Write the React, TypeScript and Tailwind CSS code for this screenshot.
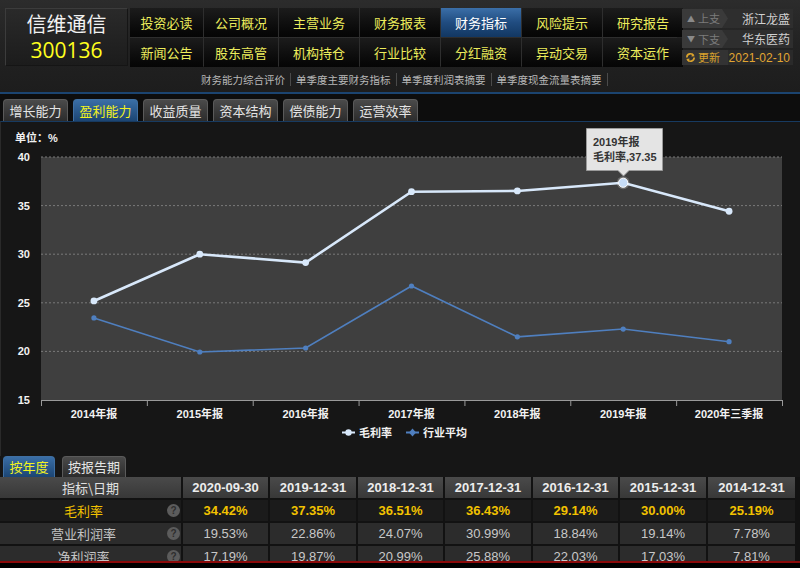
import React from "react";

const CJK = '"Noto Sans CJK SC", "Noto Sans", sans-serif';
const ARIAL = '"Liberation Sans", "Noto Sans CJK SC", Arial, sans-serif';

const navRows = [
  ["投资必读", "公司概况", "主营业务", "财务报表", "财务指标", "风险提示", "研究报告"],
  ["新闻公告", "股东高管", "机构持仓", "行业比较", "分红融资", "异动交易", "资本运作"],
];

const subnav = ["财务能力综合评价", "单季度主要财务指标", "单季度利润表摘要", "单季度现金流量表摘要"];
const tabs = ["增长能力", "盈利能力", "收益质量", "资本结构", "偿债能力", "运营效率"];

const cats = ["2014年报", "2015年报", "2016年报", "2017年报", "2018年报", "2019年报", "2020年三季报"];
const gross = [25.19, 30.0, 29.14, 36.43, 36.51, 37.35, 34.42];
const ind = [23.44, 19.94, 20.35, 26.73, 21.5, 22.3, 21.0];

const X0 = 41;
const X1 = 782;
const Y0 = 157;
const Y1 = 400;
const cw = (X1 - X0) / 7;
const px = (i: number) => X0 + cw * (i + 0.5);
const py = (v: number) => Y0 + ((40 - v) / 25) * (Y1 - Y0);

const headers = ["指标\\日期", "2020-09-30", "2019-12-31", "2018-12-31", "2017-12-31", "2016-12-31", "2015-12-31", "2014-12-31"];
const rows = [
  { name: "毛利率", vals: ["34.42%", "37.35%", "36.51%", "36.43%", "29.14%", "30.00%", "25.19%"], hi: true },
  { name: "营业利润率", vals: ["19.53%", "22.86%", "24.07%", "30.99%", "18.84%", "19.14%", "7.78%"], hi: false },
  { name: "净利润率", vals: ["17.19%", "19.87%", "20.99%", "25.88%", "22.03%", "17.03%", "7.81%"], hi: false },
];
const colW = ["w-[183px]", "w-[87px]", "w-[88px]", "w-[87px]", "w-[88px]", "w-[87px]", "w-[88px]", "w-[89px]"];

function Chart() {
  const pts1 = gross.map((v, i) => `${px(i)},${py(v)}`).join(" ");
  const pts2 = ind.map((v, i) => `${px(i)},${py(v)}`).join(" ");
  const grid = [40, 35, 30, 25, 20];
  return (
    <svg width="800" height="335" viewBox="0 121 800 335" style={{ fontFamily: ARIAL }}>
      <text x="15" y="142" fill="#f0f0f0" fontSize="11" fontWeight="bold">单位：%</text>
      <rect x={X0} y={Y0} width={X1 - X0} height={Y1 - Y0} fill="#3f3f3f" />
      {grid.map((g) => (
        <line key={g} x1={X0} x2={X1} y1={py(g)} y2={py(g)} stroke="#7a7a7a" strokeDasharray="2 2" strokeWidth="1" />
      ))}
      {[40, 35, 30, 25, 20, 15].map((g) => (
        <text key={g} x="30" y={py(g) + 4} fill="#f2f2f2" fontSize="11" fontWeight="bold" textAnchor="end">{g}</text>
      ))}
      <line x1={X0} x2={X1} y1={Y1 + 0.5} y2={Y1 + 0.5} stroke="#9a9a9a" strokeWidth="1" />
      {Array.from({ length: 8 }).map((_, i) => (
        <line key={i} x1={X0 + cw * i + 0.5} x2={X0 + cw * i + 0.5} y1={Y1} y2={Y1 + 6} stroke="#9a9a9a" strokeWidth="1" />
      ))}
      {cats.map((c, i) => (
        <text key={c} x={px(i)} y="418" fill="#f2f2f2" fontSize="11" fontWeight="bold" textAnchor="middle">{c}</text>
      ))}
      <polyline points={pts2} fill="none" stroke="#4f7fbf" strokeWidth="1.6" />
      {ind.map((v, i) => (
        <circle key={i} cx={px(i)} cy={py(v)} r="2.6" fill="#4f7fbf" />
      ))}
      <polyline points={pts1} fill="none" stroke="#d8e8fa" strokeWidth="2.6" />
      {gross.map((v, i) =>
        i === 5 ? null : <circle key={i} cx={px(i)} cy={py(v)} r="3.4" fill="#d8e8fa" />
      )}
      <circle cx={px(5)} cy={py(37.35)} r="6.5" fill="rgba(255,255,255,0.22)" />
      <circle cx={px(5)} cy={py(37.35)} r="4.6" fill="#c6dcf6" stroke="#ffffff" strokeWidth="1" />
      {/* tooltip */}
      <path d="M586.5,128.5 H662.5 V170.5 H629 L623.5,176 L618,170.5 H586.5 Z" fill="#e4e4e4" stroke="#9a9a9a" strokeWidth="1" />
      <text x="593" y="146" fill="#333" fontSize="11" fontWeight="bold">2019年报</text>
      <text x="593" y="161" fill="#333" fontSize="11" fontWeight="bold">毛利率,37.35</text>
      {/* legend */}
      <line x1="342" x2="355" y1="432.5" y2="432.5" stroke="#d8e8fa" strokeWidth="2" />
      <circle cx="348.5" cy="432.5" r="3.2" fill="#d8e8fa" />
      <text x="359" y="437" fill="#f2f2f2" fontSize="11" fontWeight="bold">毛利率</text>
      <line x1="406" x2="419" y1="432.5" y2="432.5" stroke="#4f7fbf" strokeWidth="2" />
      <path d="M412.5,428.5 L416,432.5 L412.5,436.5 L409,432.5 Z" fill="#4f7fbf" />
      <text x="423" y="437" fill="#f2f2f2" fontSize="11" fontWeight="bold">行业平均</text>
    </svg>
  );
}

function QIcon() {
  return (
    <span className="flex h-[13px] w-[13px] items-center justify-center rounded-full bg-[#5c5c5c] text-[10px] font-bold leading-none text-[#2e2e2e]" style={{ fontFamily: ARIAL }}>
      ?
    </span>
  );
}

export default function App() {
  return (
    <div className="relative h-[568px] w-[800px] overflow-hidden bg-[#000]" style={{ fontFamily: CJK }}>
      {/* header */}
      <div className="bg-gradient-to-b from-[#2c2c2c] via-[#222222] to-[#1d1d1d]">
        <div className="flex h-[67px] pl-[5px] pt-[8px]">
          <div className="flex h-[58px] w-[123px] flex-col items-center justify-center border border-t-[#3c3c3c] border-l-[#3c3c3c] border-r-[#151515] border-b-[#151515] bg-gradient-to-b from-[#2a2a2a] to-[#1c1c1c]">
            <div className="text-[20px] leading-[26px] text-[#f2f2f2]">信维通信</div>
            <div className="text-[21px] leading-[26px] text-[#ffff1e]" style={{ fontFamily: '"Open Sans", "Liberation Sans", sans-serif' }}>300136</div>
          </div>
          <div className="ml-[2px] grid h-[58px] w-[547px] grid-cols-[73px_74px_80px_80px_80px_80px_80px] grid-rows-[29px_29px] gap-px bg-[#2e2e2e]">
            {navRows.flat().map((t) => {
              const active = t === "财务指标";
              return (
                <div
                  key={t}
                  className={
                    active
                      ? "flex items-center justify-center bg-gradient-to-b from-[#3b6fa8] via-[#204c80] to-[#123762] text-[13px] text-white"
                      : "flex items-center justify-center bg-gradient-to-b from-[#1c1c1c] to-[#050505] text-[13px] text-[#ecec5c]"
                  }
                >
                  {t}
                </div>
              );
            })}
          </div>
          <div className="ml-[5px] mt-[1px] flex w-[111px] flex-col gap-[2px]">
            <div className="flex h-[19px] bg-[#2e2e2e]">
              <div className="flex w-[46px] items-center gap-[3px] bg-[#3a3a3a] pl-[5px] text-[11px] text-[#7c7c7c] [clip-path:polygon(0_0,40px_0,46px_50%,40px_100%,0_100%)]">
                <span className="text-[8px] text-[#8a8a8a]">▲</span>上支
              </div>
              <div className="flex flex-1 items-center justify-end pr-[3px] text-[12px] text-[#d0d0d0]">浙江龙盛</div>
            </div>
            <div className="flex h-[18px] bg-[#2e2e2e]">
              <div className="flex w-[46px] items-center gap-[3px] bg-[#3a3a3a] pl-[5px] text-[11px] text-[#7c7c7c] [clip-path:polygon(0_0,40px_0,46px_50%,40px_100%,0_100%)]">
                <span className="text-[8px] text-[#8a8a8a]">▼</span>下支
              </div>
              <div className="flex flex-1 items-center justify-end pr-[3px] text-[12px] text-[#d0d0d0]">华东医药</div>
            </div>
            <div className="flex h-[15px] bg-[#2a2a2a]">
              <div className="flex w-[46px] items-center gap-[2px] bg-[#333333] pl-[3px] text-[11px] text-[#d9a22c]">
                <svg width="11" height="11" viewBox="0 0 12 12">
                  <path d="M2 6 A4 4 0 0 1 9.5 4" fill="none" stroke="#d9a22c" strokeWidth="1.8" />
                  <path d="M8 1.5 L10.5 4.5 L7 5 Z" fill="#d9a22c" />
                  <path d="M10 6 A4 4 0 0 1 2.5 8" fill="none" stroke="#d9a22c" strokeWidth="1.8" />
                  <path d="M4 10.5 L1.5 7.5 L5 7 Z" fill="#d9a22c" />
                </svg>
                更新
              </div>
              <div className="flex flex-1 items-center justify-end pr-[3px] text-[12px] text-[#e2a632]" style={{ fontFamily: ARIAL }}>2021-02-10</div>
            </div>
          </div>
        </div>
        {/* subnav */}
        <div className="flex h-[25px] items-center pl-[196px] text-[10.5px] text-[#b8b8b8]">
          {subnav.map((s) => (
            <div key={s} className="flex items-center">
              <span className="px-[5px]">{s}</span>
              <span className="h-[13px] w-px bg-[#4a4a4a]" />
            </div>
          ))}
        </div>
      </div>
      <div className="h-[2px] bg-[#1b4470]" />
      {/* tabs */}
      <div className="flex h-[27px] items-end gap-[5px] bg-[#0d0d0d] pl-[3px]">
        {tabs.map((t) => {
          const active = t === "盈利能力";
          return (
            <div
              key={t}
              className={
                active
                  ? "flex h-[22px] w-[65px] items-center justify-center rounded-t-[4px] border border-b-0 border-[#3f6fa2] bg-gradient-to-b from-[#3a6ea6] to-[#1c4573] text-[13px] text-[#f2f21e]"
                  : "flex h-[22px] w-[65px] items-center justify-center rounded-t-[4px] border border-b-0 border-[#5a5a5a] bg-gradient-to-b from-[#4a4a4a] to-[#2c2c2c] text-[13px] text-[#e4e4e4]"
              }
            >
              {t}
            </div>
          );
        })}
      </div>
      {/* chart panel */}
      <div className="h-[335px] border-t border-[#173a60] border-l border-l-[#2a2a2a] bg-[#161616]">
        <div className="-mt-px -ml-px">
          <Chart />
        </div>
      </div>
      {/* bottom tabs */}
      <div className="flex h-[21px] items-end gap-[7px] bg-[#161616] pl-[3px]">
        <div className="flex h-[21px] w-[52px] items-center justify-center rounded-t-[4px] border border-b-0 border-[#3f6fa2] bg-gradient-to-b from-[#3a6ea6] to-[#1c4573] text-[13px] text-[#f2f21e]">按年度</div>
        <div className="flex h-[21px] w-[64px] items-center justify-center rounded-t-[4px] border border-b-0 border-[#5a5a5a] bg-gradient-to-b from-[#4a4a4a] to-[#2c2c2c] text-[13px] text-[#e4e4e4]">按报告期</div>
      </div>
      {/* table */}
      <div className="h-[84px] overflow-hidden bg-[#121212]">
        <div className="flex h-[23px] border-b-2 border-[#121212]">
          {headers.map((h, i) => (
            <div
              key={h}
              className={`${colW[i]} flex items-center justify-center border-r-2 border-[#121212] bg-gradient-to-b from-[#4a4a4a] to-[#383838] ${i === 0 ? "text-[13px] text-[#e0e0e0]" : "text-[13px] font-bold text-[#ececec]"}`}
              style={i === 0 ? undefined : { fontFamily: ARIAL }}
            >
              {h}
            </div>
          ))}
        </div>
        {rows.map((r) => (
          <div key={r.name} className="flex h-[23px] border-b-2 border-[#121212]">
            <div className={`${colW[0]} flex items-center border-r-2 border-[#121212] ${r.hi ? "bg-[#1b1b1b]" : "bg-[#2c2c2c]"}`}>
              <span className={`flex-1 text-center text-[13px] ${r.hi ? "text-[#f2c200]" : "text-[#c4c4c4]"}`}>{r.name}</span>
              <span className="mr-[1px] w-[13px]">
                <QIcon />
              </span>
            </div>
            {r.vals.map((v, i) => (
              <div
                key={i}
                className={`${colW[i + 1]} flex items-center justify-center border-r-2 border-[#121212] text-[13px] ${r.hi ? "bg-[#1b1b1b] font-bold text-[#f2c200]" : "bg-[#2c2c2c] text-[#c8c8c8]"}`}
                style={{ fontFamily: ARIAL }}
              >
                {v}
              </div>
            ))}
          </div>
        ))}
      </div>
      <div className="h-[2px] bg-[#8c0a0a]" />
    </div>
  );
}
